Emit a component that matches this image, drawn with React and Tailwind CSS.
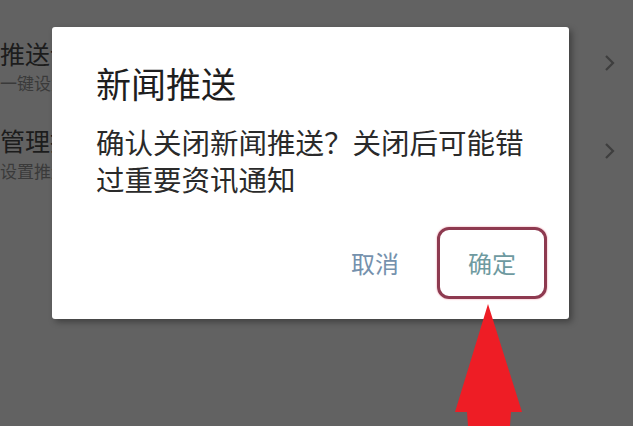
import React from "react";

const font = { fontFamily: '"Noto Sans CJK SC", "Noto Sans", sans-serif' };

function Chevron() {
  return (
    <svg width="14" height="20" viewBox="0 0 14 20" className="text-[#3e3e3e]">
      <path d="M3 3 L10 10 L3 17" fill="none" stroke="currentColor" strokeWidth="2.2" />
    </svg>
  );
}

export default function App() {
  return (
    <div className="relative w-[633px] h-[426px] overflow-hidden bg-[#626262]" style={font}>
      {/* background settings list */}
      <div className="flex flex-col pt-[22px]">
        <div className="flex items-center justify-between h-[88px] pr-[16px]">
          <div className="flex flex-col">
            <span className="text-[25px] leading-[30px] text-[#1c1c1c]">推送设置</span>
            <span className="text-[17px] leading-[24px] mt-[3px] text-[#3a3a3a]">一键设置推送</span>
          </div>
          <div className="mt-[-6px]"><Chevron /></div>
        </div>
        <div className="flex items-center justify-between h-[88px] pr-[16px]">
          <div className="flex flex-col">
            <span className="text-[25px] leading-[30px] text-[#1c1c1c]">管理推送</span>
            <span className="text-[17px] leading-[24px] mt-[4px] text-[#3a3a3a]">设置推送内容</span>
          </div>
          <div className="mt-[-6px]"><Chevron /></div>
        </div>
      </div>

      {/* dialog */}
      <div className="absolute left-[52px] top-[27px] w-[517px] h-[292px] bg-white rounded-[3px] shadow-[3px_3px_6px_rgba(0,0,0,0.35)] flex flex-col pl-[44px]">
        <div className="pt-[36px] text-[35px] leading-[40px] text-[#1e1e1e]">新闻推送</div>
        <div className="mt-[20px] w-[432px] text-[28.5px] leading-[37px] text-[#2a2a2a]">
          确认关闭新闻推送？关闭后可能错过重要资讯通知
        </div>
        <div className="flex items-center justify-end mt-[30px] pr-[22px]">
          <div className="text-[24px] leading-[30px] text-[#7591ad] mr-[38px]">取消</div>
          <div className="w-[110px] h-[72px] rounded-[12px] border-[3px] border-[#8e3a50] shadow-[0_0_2px_#f08a9a] flex items-center justify-center">
            <span className="text-[24px] leading-[30px] text-[#6e9aa0]">确定</span>
          </div>
        </div>
      </div>

      {/* red arrow */}
      <svg className="absolute left-[450px] top-[302px]" width="80" height="124" viewBox="0 0 80 124">
        <path d="M38 2 L72 110 L61 110 L60 124 L18 124 L17 110 L5 110 Z" fill="#ee1d25" />
      </svg>
    </div>
  );
}
